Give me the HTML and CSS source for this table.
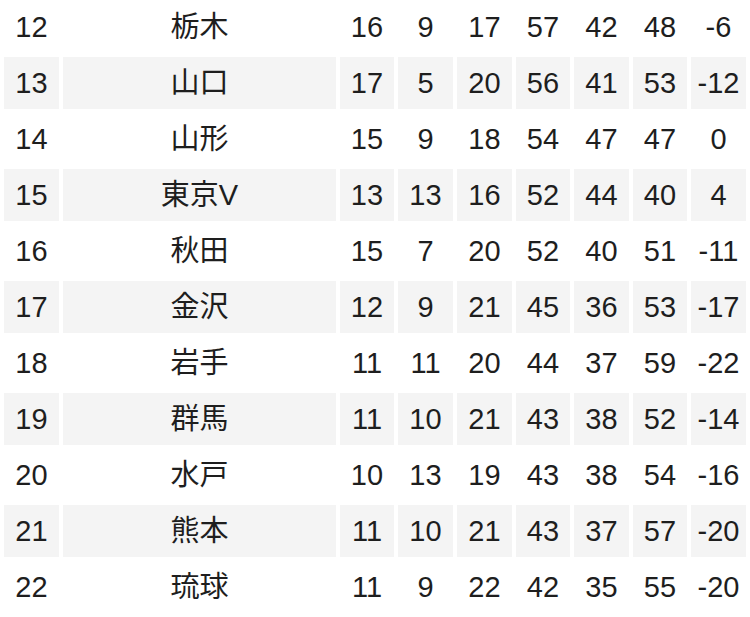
FILE: index.html
```html
<!DOCTYPE html>
<html lang="ja">
<head>
<meta charset="utf-8">
<title>順位表</title>
<link rel="stylesheet" href="styles.css">
</head>
<body>
<table class="standings">
  <colgroup>
    <col class="c-rank"><col class="c-team"><col class="c-n54"><col class="c-n55"><col class="c-n55"><col class="c-n54"><col class="c-n55"><col class="c-n54"><col class="c-n55">
  </colgroup>
  <tbody>
    <tr><td>12</td><td>栃木</td><td>16</td><td>9</td><td>17</td><td>57</td><td>42</td><td>48</td><td>-6</td></tr>
    <tr><td>13</td><td>山口</td><td>17</td><td>5</td><td>20</td><td>56</td><td>41</td><td>53</td><td>-12</td></tr>
    <tr><td>14</td><td>山形</td><td>15</td><td>9</td><td>18</td><td>54</td><td>47</td><td>47</td><td>0</td></tr>
    <tr><td>15</td><td>東京V</td><td>13</td><td>13</td><td>16</td><td>52</td><td>44</td><td>40</td><td>4</td></tr>
    <tr><td>16</td><td>秋田</td><td>15</td><td>7</td><td>20</td><td>52</td><td>40</td><td>51</td><td>-11</td></tr>
    <tr><td>17</td><td>金沢</td><td>12</td><td>9</td><td>21</td><td>45</td><td>36</td><td>53</td><td>-17</td></tr>
    <tr><td>18</td><td>岩手</td><td>11</td><td>11</td><td>20</td><td>44</td><td>37</td><td>59</td><td>-22</td></tr>
    <tr><td>19</td><td>群馬</td><td>11</td><td>10</td><td>21</td><td>43</td><td>38</td><td>52</td><td>-14</td></tr>
    <tr><td>20</td><td>水戸</td><td>10</td><td>13</td><td>19</td><td>43</td><td>38</td><td>54</td><td>-16</td></tr>
    <tr><td>21</td><td>熊本</td><td>11</td><td>10</td><td>21</td><td>43</td><td>37</td><td>57</td><td>-20</td></tr>
    <tr><td>22</td><td>琉球</td><td>11</td><td>9</td><td>22</td><td>42</td><td>35</td><td>55</td><td>-20</td></tr>
  </tbody>
</table>
</body>
</html>
```
FILE: styles.css
```css
html, body {
  margin: 0;
  padding: 0;
  background: #ffffff;
}

body {
  font-family: "Liberation Sans", "Noto Sans CJK JP", sans-serif;
  color: #1e1e1e;
  overflow: hidden;
}

.standings {
  width: 750px;
  table-layout: fixed;
  border-collapse: separate;
  border-spacing: 4px;
  margin-top: -3px;
}

.c-rank { width: 55px; }
.c-team { width: 273px; }
.c-n54 { width: 54px; }
.c-n55 { width: 55px; }

.standings td {
  box-sizing: border-box;
  height: 52px;
  padding: 1px 0 0;
  text-align: center;
  vertical-align: middle;
  font-size: 29px;
  line-height: 1;
  white-space: nowrap;
}

.standings tr:nth-child(even) td {
  background: #f4f4f4;
}
```
